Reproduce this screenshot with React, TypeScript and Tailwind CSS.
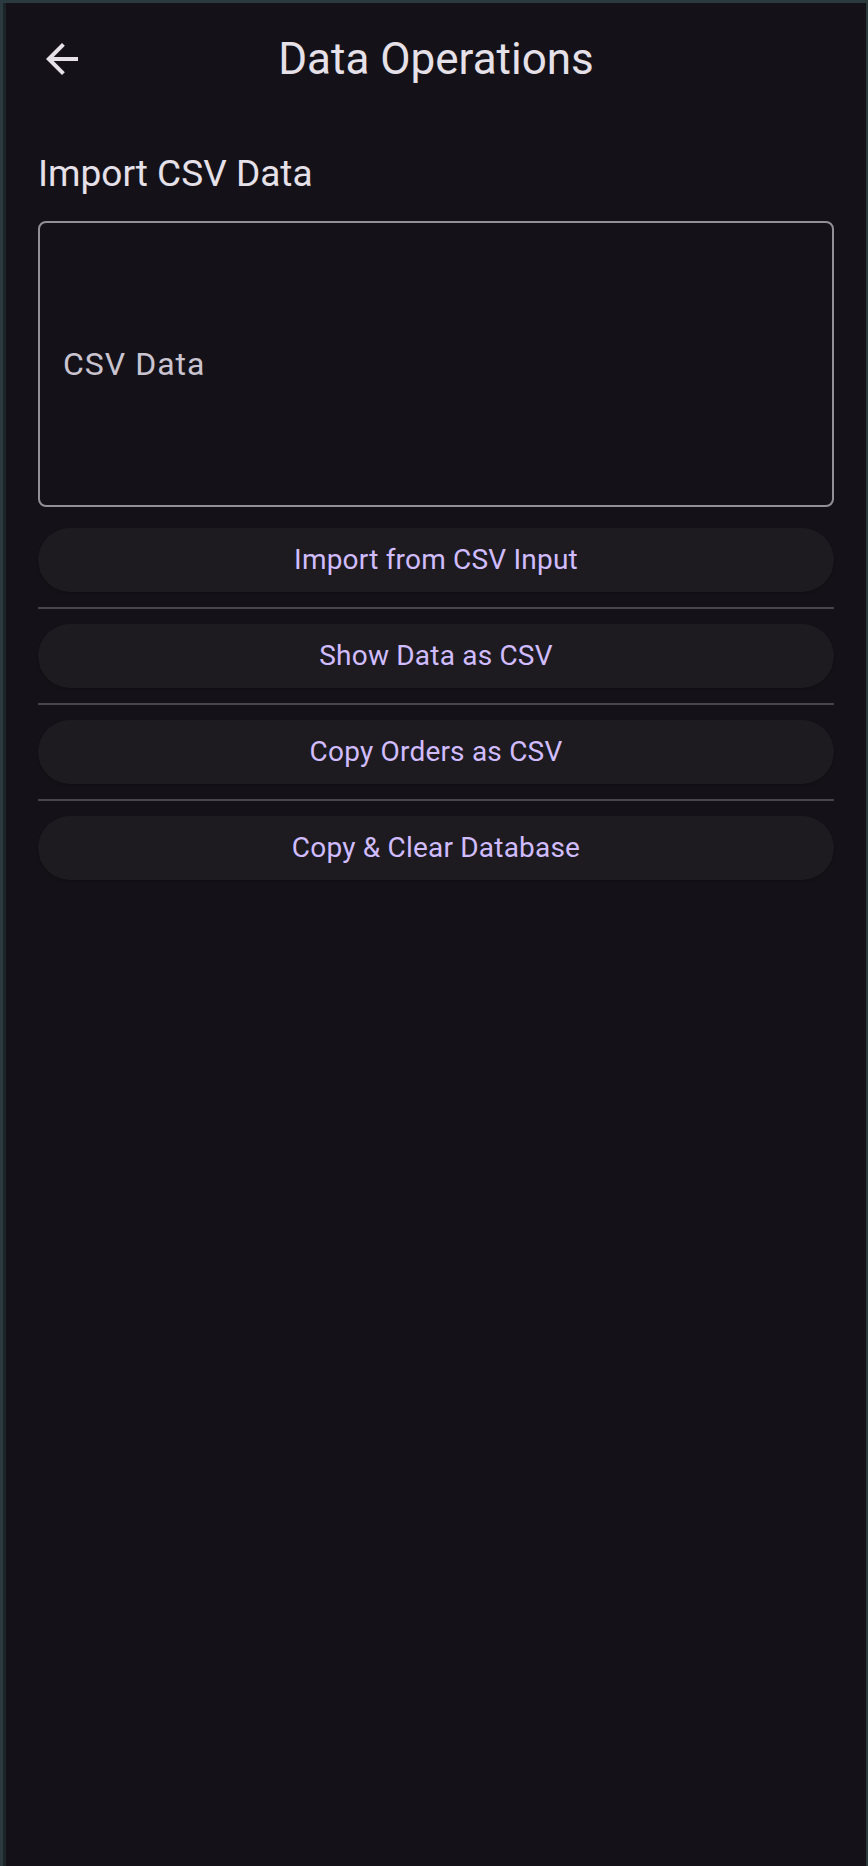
import React from "react";

const buttons = [
  "Import from CSV Input",
  "Show Data as CSV",
  "Copy Orders as CSV",
  "Copy & Clear Database",
];

export default function App() {
  return (
    <div
      className="w-[868px] h-[1866px] bg-[#2b3a3e] pt-[3px] pr-[2px] pl-[3px] flex"
      style={{ fontFamily: "Roboto, 'Noto Sans', sans-serif" }}
    >
      <div className="pl-[3px] bg-[#1b2427] flex flex-1">
        <div className="flex-1 bg-[#141218] flex flex-col">
          <header className="h-[112px] flex items-center relative px-[32px]">
            <button className="w-[48px] h-[48px] flex items-center justify-center">
              <svg width="48" height="48" viewBox="0 0 24 24" fill="#e6e0e9">
                <path d="M20 11H7.83l5.59-5.59L12 4l-8 8 8 8 1.41-1.41L7.83 13H20v-2z" />
              </svg>
            </button>
            <h1 className="absolute left-0 right-0 text-center text-[44px] leading-[52px] text-[#e6e0e9] pointer-events-none">
              Data Operations
            </h1>
          </header>

          <main className="px-[32px] pt-[37px] flex flex-col">
            <h2 className="text-[37px] leading-[44px] text-[#e6e0e9]">
              Import CSV Data
            </h2>
            <div className="mt-[25px] h-[286px] border-2 border-[#938f99] rounded-[8px] flex items-center pl-[23px]">
              <span className="text-[32px] leading-[40px] tracking-[1px] text-[#cac4d0]">
                CSV Data
              </span>
            </div>

            <div className="mt-[21px] flex flex-col">
              {buttons.map((b, i) => (
                <React.Fragment key={b}>
                  {i > 0 && (
                    <div className="h-[32px] flex items-center">
                      <div className="h-[2px] w-full bg-[#49454f]" />
                    </div>
                  )}
                  <button className="h-[64px] w-full rounded-full bg-[#1d1b20] shadow-[0_1px_2px_rgba(0,0,0,0.3)] text-[28px] font-normal tracking-[0.2px] text-[#d0bcff] flex items-center justify-center">
                    {b}
                  </button>
                </React.Fragment>
              ))}
            </div>
          </main>
        </div>
      </div>
    </div>
  );
}
